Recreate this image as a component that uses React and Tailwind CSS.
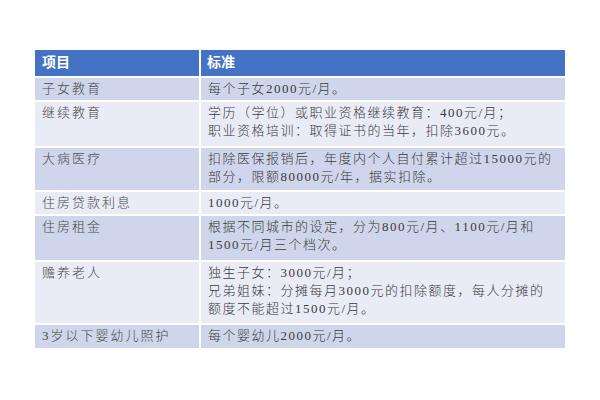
import React from "react";

const rows = [
  { item: "子女教育", text: ["每个子女2000元/月。"], h: "h-[22px]", dark: true },
  {
    item: "继续教育",
    text: ["学历（学位）或职业资格继续教育：400元/月；", "职业资格培训：取得证书的当年，扣除3600元。"],
    h: "h-[44px]",
    dark: false,
  },
  {
    item: "大病医疗",
    text: ["扣除医保报销后，年度内个人自付累计超过15000元的", "部分，限额80000元/年，据实扣除。"],
    h: "h-[42px]",
    dark: true,
  },
  { item: "住房贷款利息", text: ["1000元/月。"], h: "h-[22px]", dark: false },
  {
    item: "住房租金",
    text: ["根据不同城市的设定，分为800元/月、1100元/月和", "1500元/月三个档次。"],
    h: "h-[44px]",
    dark: true,
  },
  {
    item: "赡养老人",
    text: ["独生子女：3000元/月；", "兄弟姐妹：分摊每月3000元的扣除额度，每人分摊的", "额度不能超过1500元/月。"],
    h: "h-[61px]",
    dark: false,
  },
  { item: "3岁以下婴幼儿照护", text: ["每个婴幼儿2000元/月。"], h: "h-[23px]", dark: true },
];

export default function App() {
  return (
    <div
      className="w-[600px] h-[400px] bg-white pt-[50px] pl-[35px]"
      style={{ fontFamily: '"Liberation Serif", "Noto Sans CJK SC", sans-serif' }}
    >
      <div className="w-[530px] grid grid-cols-[164px_1fr] gap-[2px] bg-white">
        {/* Header */}
        <div className="h-[26px] bg-[#4472c4] text-white font-bold text-[14px] leading-[26px] pl-[7px]">
          项目
        </div>
        <div className="h-[26px] bg-[#4472c4] text-white font-bold text-[14px] leading-[26px] pl-[6px]">
          标准
        </div>

        {rows.map((r) => (
          <React.Fragment key={r.item}>
            <div
              className={`${r.h} ${r.dark ? "bg-[#cfd5ea]" : "bg-[#e9ebf5]"} pl-[7px] pt-[2px] text-[13px] leading-[18px] tracking-[2px] text-[#4a4a4a] font-light`}
            >
              {r.item}
            </div>
            <div
              className={`${r.h} ${r.dark ? "bg-[#cfd5ea]" : "bg-[#e9ebf5]"} pl-[7px] pt-[2px] text-[13px] leading-[18px] tracking-[1.5px] text-[#3a3a3a] font-light`}
            >
              {r.text.map((t) => (
                <div key={t} className="whitespace-nowrap">
                  {t}
                </div>
              ))}
            </div>
          </React.Fragment>
        ))}
      </div>
    </div>
  );
}
